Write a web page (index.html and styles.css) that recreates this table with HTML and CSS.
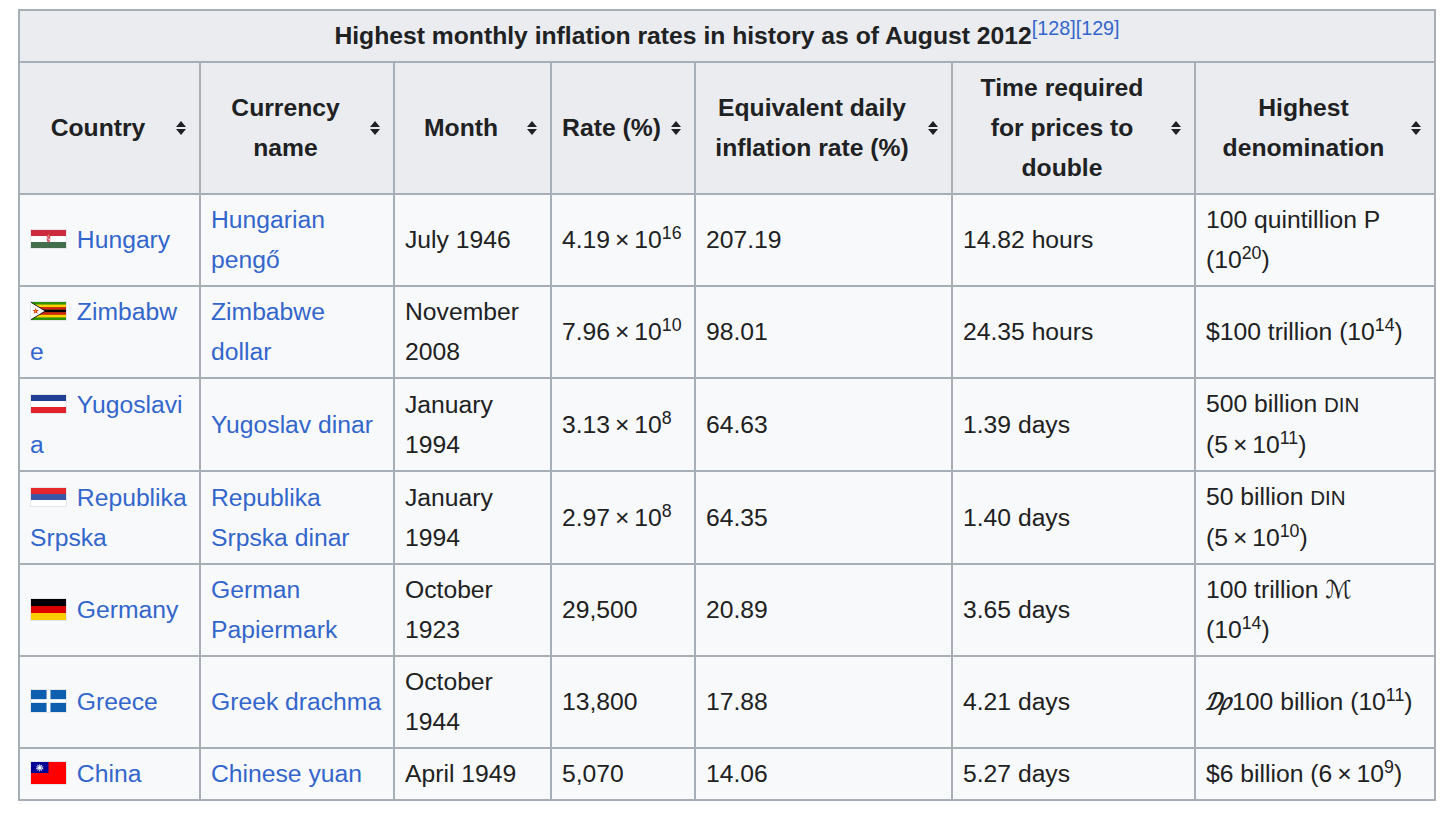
FILE: index.html
```html
<!DOCTYPE html>
<html lang="en">
<head>
<meta charset="utf-8">
<title>Highest monthly inflation rates in history</title>
<link rel="stylesheet" href="styles.css">
</head>
<body>
<table class="wikitable">
  <colgroup>
    <col class="c-country"><col class="c-currency"><col class="c-month"><col class="c-rate"><col class="c-daily"><col class="c-double"><col class="c-denom">
  </colgroup>
  <thead>
    <tr>
      <th colspan="7" class="caption">Highest monthly inflation rates in history as of August 2012<sup class="ref"><a href="#">[128]</a></sup><sup class="ref"><a href="#">[129]</a></sup></th>
    </tr>
    <tr>
      <th class="sortable">Country<span class="sort"><svg width="10" height="14" viewBox="0 0 10 14"><path d="M5 0L10 6H0Z M0 8H10L5 14Z" fill="#202122"/></svg></span></th>
      <th class="sortable">Currency name<span class="sort"><svg width="10" height="14" viewBox="0 0 10 14"><path d="M5 0L10 6H0Z M0 8H10L5 14Z" fill="#202122"/></svg></span></th>
      <th class="sortable">Month<span class="sort"><svg width="10" height="14" viewBox="0 0 10 14"><path d="M5 0L10 6H0Z M0 8H10L5 14Z" fill="#202122"/></svg></span></th>
      <th class="sortable nowrap">Rate (%)<span class="sort"><svg width="10" height="14" viewBox="0 0 10 14"><path d="M5 0L10 6H0Z M0 8H10L5 14Z" fill="#202122"/></svg></span></th>
      <th class="sortable">Equivalent daily inflation rate (%)<span class="sort"><svg width="10" height="14" viewBox="0 0 10 14"><path d="M5 0L10 6H0Z M0 8H10L5 14Z" fill="#202122"/></svg></span></th>
      <th class="sortable">Time required for prices to double<span class="sort"><svg width="10" height="14" viewBox="0 0 10 14"><path d="M5 0L10 6H0Z M0 8H10L5 14Z" fill="#202122"/></svg></span></th>
      <th class="sortable">Highest denomination<span class="sort"><svg width="10" height="14" viewBox="0 0 10 14"><path d="M5 0L10 6H0Z M0 8H10L5 14Z" fill="#202122"/></svg></span></th>
    </tr>
  </thead>
  <tbody>
    <tr>
      <td><span class="flagicon"><svg class="flag f2x1" viewBox="0 0 36 18" preserveAspectRatio="none"><rect width="36" height="6" fill="#cd2a3e"/><rect y="6" width="36" height="6" fill="#ffffff"/><rect y="12" width="36" height="6" fill="#436f4d"/><path d="M16.2 5.6h3.6v4.2q0 2.2-1.8 2.8q-1.8-.6-1.8-2.8z" fill="#d9566a"/><path d="M16.2 7.4h1.8v1.2h-1.8z M18 9h1.8v1.2H18z" fill="#f3c9cf"/><circle cx="18" cy="5.2" r=".8" fill="#c9a13a"/></svg>&nbsp;</span><a href="#">Hungary</a></td>
      <td><a href="#">Hungarian pengő</a></td>
      <td>July 1946</td>
      <td><span class="nowrap">4.19&thinsp;×&thinsp;10<sup>16</sup></span></td>
      <td>207.19</td>
      <td>14.82 hours</td>
      <td>100 quintillion P <span class="nowrap">(10<sup>20</sup>)</span></td>
    </tr>
    <tr>
      <td><span class="flagicon"><svg class="flag f2x1" viewBox="0 0 252 126" preserveAspectRatio="none"><rect width="252" height="126" fill="#319208"/><rect y="18" width="252" height="18" fill="#ffd200"/><rect y="36" width="252" height="18" fill="#de2010"/><rect y="54" width="252" height="18" fill="#000000"/><rect y="72" width="252" height="18" fill="#de2010"/><rect y="90" width="252" height="18" fill="#ffd200"/><path d="M0 0L109 63L0 126Z" fill="#000000"/><path d="M0 6L98 63L0 120Z" fill="#ffffff"/><path d="M34 40L40 56L57 56L43 66L48 83L34 73L20 83L25 66L11 56L28 56Z" fill="#de2010"/><path d="M31 52h6v20h-6z" fill="#ffd200"/></svg>&nbsp;</span><a href="#">Zimbabwe</a></td>
      <td><a href="#">Zimbabwe dollar</a></td>
      <td>November 2008</td>
      <td><span class="nowrap">7.96&thinsp;×&thinsp;10<sup>10</sup></span></td>
      <td>98.01</td>
      <td>24.35 hours</td>
      <td>$100 trillion <span class="nowrap">(10<sup>14</sup>)</span></td>
    </tr>
    <tr>
      <td><span class="flagicon"><svg class="flag f2x1" viewBox="0 0 6 3" preserveAspectRatio="none"><rect width="6" height="1" fill="#1f3e94"/><rect y="1" width="6" height="1" fill="#ffffff"/><rect y="2" width="6" height="1" fill="#e2212a"/></svg>&nbsp;</span><a href="#">Yugoslavia</a></td>
      <td><a href="#">Yugoslav dinar</a></td>
      <td>January 1994</td>
      <td><span class="nowrap">3.13&thinsp;×&thinsp;10<sup>8</sup></span></td>
      <td>64.63</td>
      <td>1.39 days</td>
      <td>500 billion <span class="sc">DIN</span> <span class="nowrap">(5&thinsp;×&thinsp;10<sup>11</sup>)</span></td>
    </tr>
    <tr>
      <td><span class="flagicon"><svg class="flag f2x1" viewBox="0 0 6 3" preserveAspectRatio="none"><rect width="6" height="1" fill="#e6262c"/><rect y="1" width="6" height="1" fill="#3a56a6"/><rect y="2" width="6" height="1" fill="#ffffff"/></svg>&nbsp;</span><a href="#">Republika Srpska</a></td>
      <td><a href="#">Republika Srpska dinar</a></td>
      <td>January 1994</td>
      <td><span class="nowrap">2.97&thinsp;×&thinsp;10<sup>8</sup></span></td>
      <td>64.35</td>
      <td>1.40 days</td>
      <td>50 billion <span class="sc">DIN</span> <span class="nowrap">(5&thinsp;×&thinsp;10<sup>10</sup>)</span></td>
    </tr>
    <tr>
      <td><span class="flagicon"><svg class="flag f5x3" viewBox="0 0 5 3" preserveAspectRatio="none"><rect width="5" height="1" fill="#000000"/><rect y="1" width="5" height="1" fill="#dd0000"/><rect y="2" width="5" height="1" fill="#ffce00"/></svg>&nbsp;</span><a href="#">Germany</a></td>
      <td><a href="#">German Papiermark</a></td>
      <td>October 1923</td>
      <td>29,500</td>
      <td>20.89</td>
      <td>3.65 days</td>
      <td>100 trillion <span class="script">ℳ</span><br><span class="nowrap">(10<sup>14</sup>)</span></td>
    </tr>
    <tr>
      <td><span class="flagicon"><svg class="flag f3x2" viewBox="0 0 27 18" preserveAspectRatio="none"><rect width="27" height="18" fill="#0d5eaf"/><rect x="12" width="3" height="18" fill="#ffffff"/><rect y="7.5" width="27" height="3" fill="#ffffff"/></svg>&nbsp;</span><a href="#">Greece</a></td>
      <td><a href="#">Greek drachma</a></td>
      <td>October 1944</td>
      <td>13,800</td>
      <td>17.88</td>
      <td>4.21 days</td>
      <td><span class="script">₯</span>100 billion <span class="nowrap">(10<sup>11</sup>)</span></td>
    </tr>
    <tr>
      <td><span class="flagicon"><svg class="flag f3x2" viewBox="0 0 240 160" preserveAspectRatio="none"><rect width="240" height="160" fill="#fe0000"/><rect width="120" height="80" fill="#000095"/><path d="M60 12L65 28L78 18L73 34L89 32L77 42L89 52L73 50L78 66L65 56L60 72L55 56L42 66L47 50L31 52L43 42L31 32L47 34L42 18L55 28Z" fill="#ffffff"/><circle cx="60" cy="42" r="15" fill="#000095"/><circle cx="60" cy="42" r="12.5" fill="#ffffff"/></svg>&nbsp;</span><a href="#">China</a></td>
      <td><a href="#">Chinese yuan</a></td>
      <td>April 1949</td>
      <td>5,070</td>
      <td>14.06</td>
      <td>5.27 days</td>
      <td>$6 billion <span class="nowrap">(6&thinsp;×&thinsp;10<sup>9</sup>)</span></td>
    </tr>
  </tbody>
</table>
</body>
</html>
```

FILE: styles.css
```css
html {
  background: #ffffff;
}

body {
  margin: 0;
  font-family: "Liberation Sans", Arial, "DejaVu Sans", sans-serif;
  font-size: 24.7px;
  line-height: 40px;
  color: #202122;
}

.wikitable {
  border-collapse: collapse;
  table-layout: fixed;
  width: 1418px;
  margin: 9px 0 0 18px;
  background: #f8f9fa;
  color: #202122;
}

.c-country { width: 181px; }
.c-currency { width: 194px; }
.c-month { width: 157px; }
.c-rate { width: 144px; }
.c-daily { width: 257px; }
.c-double { width: 243px; }
.c-denom { width: 240px; }

.wikitable th,
.wikitable td {
  border: 2px solid #a7aeb6;
  padding: 5px 10px;
  vertical-align: middle;
}

.wikitable th {
  background: #eaecf0;
  font-weight: bold;
  text-align: center;
}

.wikitable td {
  text-align: left;
  overflow-wrap: anywhere;
}

.wikitable th.sortable {
  position: relative;
  padding-right: 33px;
}

.sort {
  position: absolute;
  right: 13px;
  top: 50%;
  margin-top: -7px;
  width: 10px;
  height: 14px;
  line-height: 0;
}

.nowrap {
  white-space: nowrap;
}

a {
  color: #3366cc;
  text-decoration: none;
}

sup {
  font-size: 0.72em;
  line-height: 1;
}

sup.ref {
  font-size: 0.8em;
  font-weight: normal;
}

.sc {
  font-size: 0.83em;
}

.script {
  font-family: "DejaVu Serif", "DejaVu Sans", serif;
  font-style: italic;
}

.flagicon {
  white-space: nowrap;
}

.flag {
  display: inline-block;
  vertical-align: middle;
  width: 35px;
  border: 1px solid #e4e6ea;
  margin-right: 3px;
  position: relative;
  top: -2px;
}

.f2x1 { height: 18px; }
.f5x3 { height: 21px; }
.f3x2 { height: 22px; }
```
